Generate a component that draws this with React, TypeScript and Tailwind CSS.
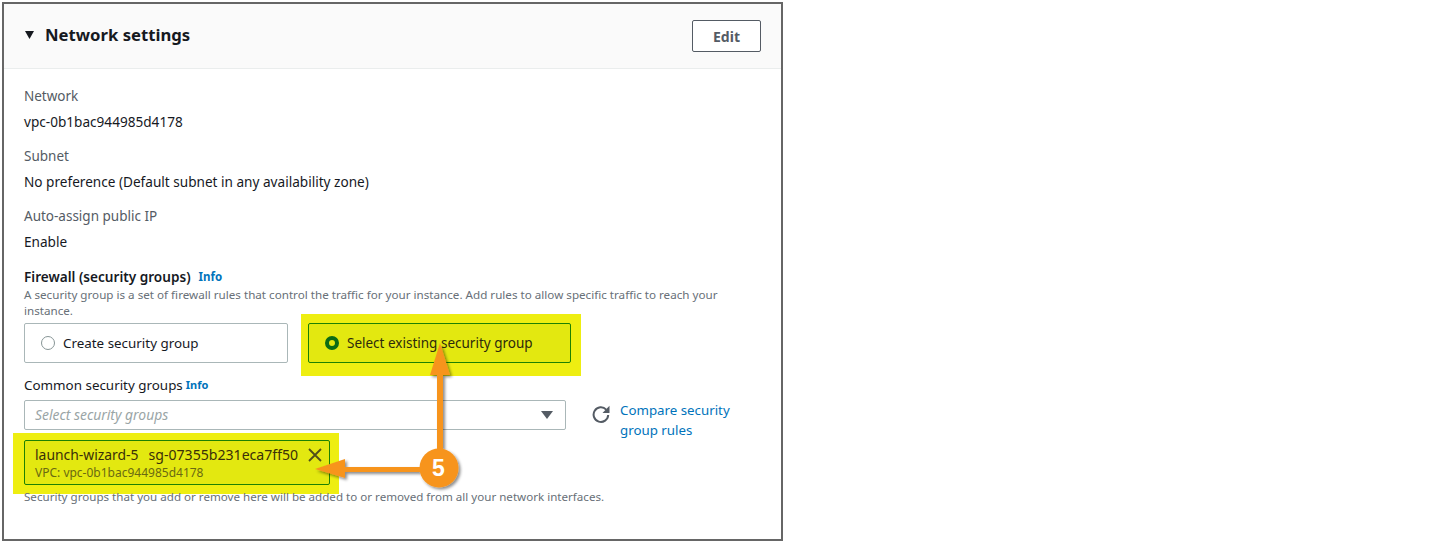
function Field({ label, value }: { label: string; value: string }) {
  return (
    <div className="h-[60px]">
      <div className="h-[26px] pt-[2px] text-[13.5px] leading-[20px] text-[#545b64]">{label}</div>
      <div className="text-[13.6px] leading-[20px] pt-[2px] text-[#16191f]">{value}</div>
    </div>
  );
}

function Annotations() {
  return (
    <svg className="absolute left-0 top-0 pointer-events-none" width="783" height="543" viewBox="0 0 783 543">
      <defs>
        <filter id="drop" x="-30%" y="-30%" width="160%" height="160%">
          <feDropShadow dx="2" dy="2" stdDeviation="1.5" floodColor="#000" floodOpacity="0.45" />
        </filter>
      </defs>
      <g filter="url(#drop)" fill="#f7941f">
        <rect x="437" y="374" width="6" height="90" />
        <polygon points="440,343 430,375 450,375" />
        <rect x="343" y="467" width="90" height="5" />
        <polygon points="315,469 345,459 345,478" />
        <circle cx="439" cy="468" r="19.5" />
      </g>
    </svg>
  );
}

export default function App() {
  return (
    <div className="relative w-[1442px] h-[543px] bg-white pt-[2px] pl-[2px] font-['Noto_Sans','Open_Sans',sans-serif]">
      <div className="w-[781px] h-[539px] border-2 border-[#666666] bg-white">
        <div className="h-[65px] bg-[#fafafa] border-b border-[#eaeded] flex items-center justify-between pl-[21px] pr-[20px]">
          <div className="flex items-center gap-[11px] pb-[2px]">
            <svg width="9" height="8" viewBox="0 0 9 8">
              <polygon points="0,0 9,0 4.5,8" fill="#16191f" />
            </svg>
            <h2 className="text-[16.7px] font-bold text-[#16191f] leading-[24px]">Network settings</h2>
          </div>
          <button className="w-[69px] h-[32px] pt-[1px] border border-[#545b64] rounded-[2px] bg-white text-[14px] font-bold text-[#545b64]">
            Edit
          </button>
        </div>

        <div className="pl-[20px] pr-[20px] pt-[15px]">
          <Field label="Network" value="vpc-0b1bac944985d4178" />
          <Field label="Subnet" value="No preference (Default subnet in any availability zone)" />
          <Field label="Auto-assign public IP" value="Enable" />

          <div className="mt-[3px] flex items-center gap-[8px] h-[20px]">
            <span className="text-[13.6px] font-semibold text-[#16191f]">Firewall (security groups)</span>
            <span className="text-[11.5px] font-bold text-[#0073bb]">Info</span>
          </div>
          <p className="w-[720px] text-[11.65px] leading-[16px] text-[#687078]">
            A security group is a set of firewall rules that control the traffic for your instance. Add rules to allow specific traffic to reach your instance.
          </p>

          <div className="relative mt-[4px] flex gap-[20px]">
            <div className="absolute left-[277px] top-[-9px] w-[280px] h-[62px] bg-[#eeee11]" />
            <div className="w-[264px] h-[40px] border border-[#aab7b8] rounded-[2px] flex items-center pl-[16px] gap-[8px]">
              <span className="w-[14px] h-[14px] rounded-full border-[1.5px] border-[#879596] bg-white" />
              <span className="text-[13.4px] text-[#16191f]">Create security group</span>
            </div>
            <div className="relative w-[263px] h-[40px] border border-[#1d8102] rounded-[2px] bg-[#e3e810] flex items-center pl-[16px] gap-[8px]">
              <span className="w-[14px] h-[14px] rounded-full border-[4px] border-[#0b6b14] bg-[#e3e810]" />
              <span className="text-[13.5px] text-[#2d2a0c]">Select existing security group</span>
            </div>
          </div>

          <div className="mt-[12px] h-[20px] flex items-center gap-[3px]">
            <span className="text-[13.4px] text-[#16191f]">Common security groups</span>
            <span className="text-[11px] font-bold text-[#0073bb]">Info</span>
          </div>

          <div className="mt-[5px] flex items-start">
            <div className="w-[542px] h-[30px] border border-[#aab7b8] rounded-[2px] flex items-center justify-between pl-[10px] pr-[12px]">
              <span className="text-[13.9px] italic text-[#9aa5a6]">Select security groups</span>
              <svg width="12" height="8" viewBox="0 0 12 8">
                <polygon points="0,0 12,0 6,8" fill="#545b64" />
              </svg>
            </div>
            <svg className="ml-[26px] mt-[5px]" width="18" height="19" viewBox="0 0 18 19">
              <path d="M14.2 4.6 A7.3 7.3 0 1 0 16.2 10" fill="none" stroke="#545b64" strokeWidth="2" />
              <polygon points="17.5,0.8 17.5,8 10.5,8" fill="#545b64" />
            </svg>
            <a className="ml-[10px] w-[130px] text-[13.3px] leading-[20px] text-[#0073bb]">Compare security group rules</a>
          </div>

          <div className="relative mt-[0px]">
            <div className="absolute left-[-11px] top-[-7px] w-[326px] h-[61px] bg-[#eeee11]" />
            <div className="relative w-[306px] h-[45px] border border-[#1d8102] rounded-[2px] bg-[#e3e810] pl-[10px] pt-[4px]">
              <div className="flex items-center gap-[10px] h-[20px] text-[#3a2f08]">
                <span className="text-[13.9px]">launch-wizard-5</span>
                <span className="text-[14.1px]">sg-07355b231eca7ff50</span>
              </div>
              <div className="text-[12px] leading-[16px] text-[#6a6a12]">VPC: vpc-0b1bac944985d4178</div>
              <svg className="absolute right-[7px] top-[7px]" width="14" height="14" viewBox="0 0 14 14">
                <path d="M1 1 L13 13 M13 1 L1 13" stroke="#4f4f1a" strokeWidth="1.8" />
              </svg>
            </div>
          </div>

          <p className="relative mt-[4px] text-[11.6px] leading-[16px] text-[#687078]">
            Security groups that you add or remove here will be added to or removed from all your network interfaces.
          </p>
        </div>
      </div>

      <Annotations />
      <span className="absolute left-[432px] top-[454px] text-[23px] leading-[28px] font-bold text-white font-['Liberation_Sans',sans-serif]">5</span>
    </div>
  );
}
